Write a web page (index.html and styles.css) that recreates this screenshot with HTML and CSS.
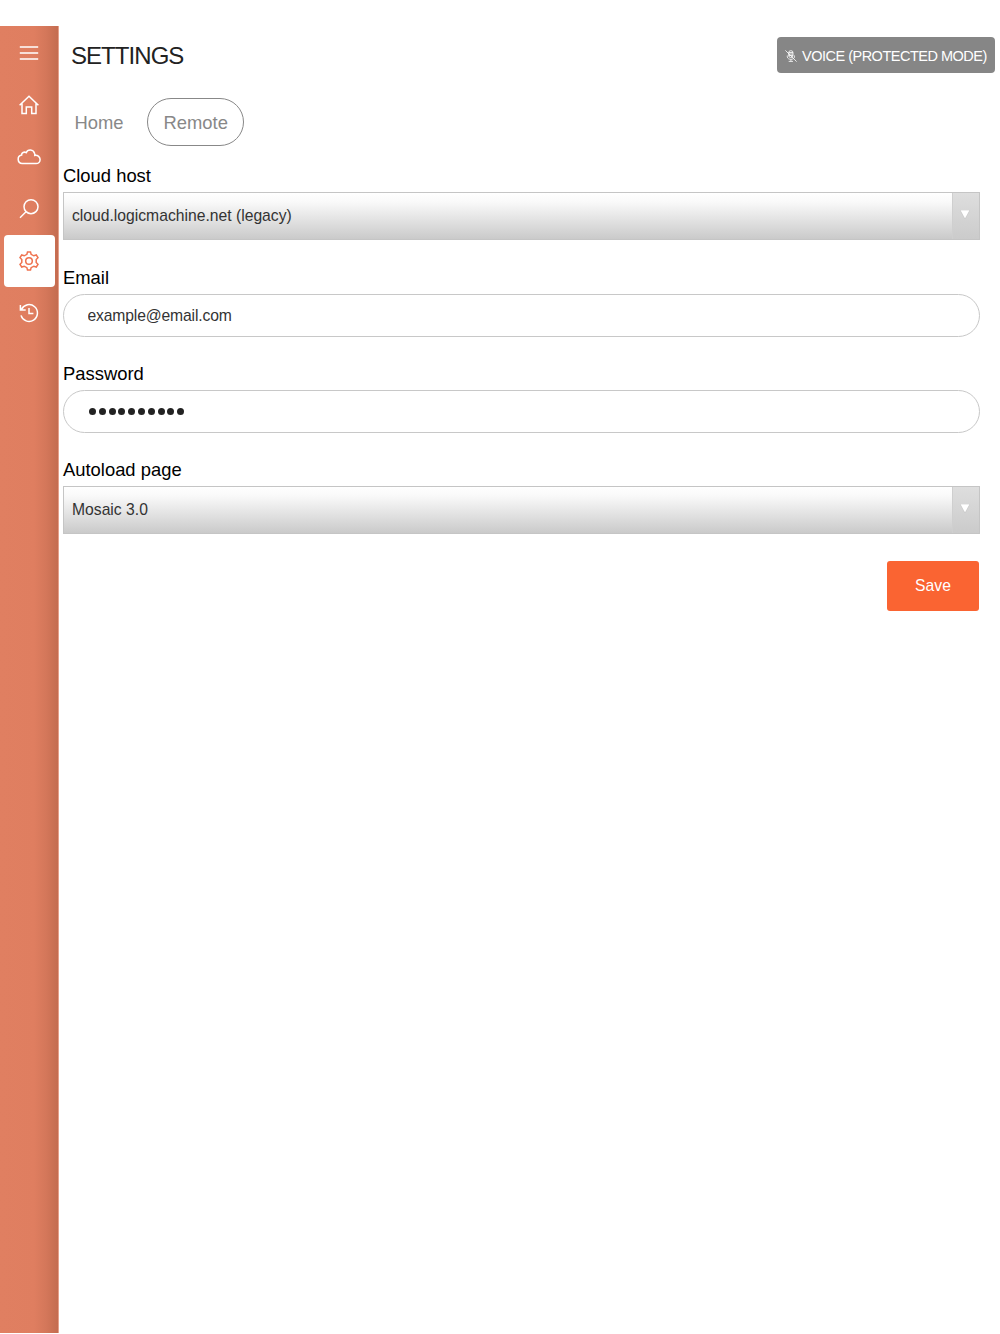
FILE: index.html
```
<!DOCTYPE html>
<html lang="en">
<head>
    <meta charset="UTF-8">
    <meta name="viewport" content="width=device-width, initial-scale=1.0">
    <title>Settings</title>
    <link rel="stylesheet" href="styles.css">
</head>
<body>

    <div class="app">
        <nav class="sidebar">
            <a class="nav-item" href="#" aria-label="Menu">
                <svg class="icon" viewBox="0 0 24 24"><path d="M2.8 5.9h18.4M2.8 12h18.4M2.8 18h18.4"/></svg>
            </a>
            <a class="nav-item" href="#" aria-label="Home">
                <svg class="icon" viewBox="0 0 24 24"><path d="M2.6 12.3 12 3.2l9.400 9.100M5 10.500v10.100h4.300v-6.700h5.400v6.700H19V10.500"/></svg>
            </a>
            <a class="nav-item" href="#" aria-label="Cloud">
                <svg class="icon" viewBox="0 0 24 24"><path d="M5.200 18.600a4.300 4.300 0 0 1-.6-8.500C4.400 7.800 7.200 6.300 9.200 7.700c1.600-4 7.300-3.600 8.400.8.300.7.300 1.300.2 1.900 3.100-.4 5.300 1.500 5.300 4.100 0 2.300-1.700 4.100-4 4.100z"/></svg>
            </a>
            <a class="nav-item" href="#" aria-label="Search">
                <svg class="icon" viewBox="0 0 24 24"><circle cx="14" cy="9.700" r="7"/><path d="M9 14.700 3 20.700"/></svg>
            </a>
            <a class="nav-item active" href="#" aria-label="Settings">
                <svg class="icon" viewBox="0 0 24 24"><path d="M9.900 5.300 10.500 2.900h3l.6 2.400 2.700 1.500 2.500-.8 1.700 2.700-1.800 1.800v3l1.800 1.800-1.700 2.700-2.500-.8-2.700 1.500-.6 2.400h-3l-.6-2.400-2.700-1.500-2.500.8L3 15.300l1.800-1.800v-3L3 8.700 4.700 6l2.500.8z"/><circle cx="12" cy="12" r="3.300"/></svg>
            </a>
            <a class="nav-item" href="#" aria-label="History">
                <svg class="icon" viewBox="0 0 24 24"><path d="M4.500 8.300A8.400 8.400 0 1 1 4 14.400M3.400 4v5h5.300M12 7v5.500h4.400"/></svg>
            </a>
        </nav>

        <main class="content">
            <header class="header">
                <h1 class="title">SETTINGS</h1>
                <button class="voice" type="button">
                    <svg class="mic" viewBox="0 0 12 12"><rect x="3.700" y=".7" width="4.300" height="6.800" rx="2"/><path d="M3.700 2.500H8M3.700 4H8M3.700 5.500H8M2.300 5.500v1.300c0 3.400 7.200 3.400 7.200 0V5.500M5.900 9.400v1.900M3.700 11.400H8M.4.400l11.200 11.200"/></svg>
                    <span>VOICE (PROTECTED MODE)</span>
                </button>
            </header>

            <div class="tabs">
                <a class="tab" href="#">Home</a>
                <a class="tab selected" href="#">Remote</a>
            </div>

            <form class="form">
                <label class="label">Cloud host</label>
                <div class="select">
                    <span class="select-value">cloud.logicmachine.net (legacy)</span>
                    <span class="select-arrow"><svg viewBox="0 0 10 9"><path d="M0 0h10L5 9z"/></svg></span>
                </div>

                <label class="label email-label" for="email">Email</label>
                <input class="input email" id="email" type="text" value="example@email.com">

                <label class="label">Password</label>
                <div class="input dots">
                    <i></i><i></i><i></i><i></i><i></i><i></i><i></i><i></i><i></i><i></i>
                </div>

                <label class="label">Autoload page</label>
                <div class="select">
                    <span class="select-value">Mosaic 3.0</span>
                    <span class="select-arrow"><svg viewBox="0 0 10 9"><path d="M0 0h10L5 9z"/></svg></span>
                </div>

                <button class="save" type="button">Save</button>
            </form>
        </main>
    </div>

</body>
</html>
```

FILE: styles.css
```
* {
    box-sizing: border-box;
}

body {
    margin: 0;
    padding-top: 26px;
    background-color: #fff;
    font-family: "Liberation Sans", Arial, sans-serif;
    color: #000;
}

a {
    text-decoration: none;
}

.app {
    display: flex;
    height: 1307px;
}

/* Sidebar */
.sidebar {
    width: 59px;
    padding: 1px 4px 0;
    background: linear-gradient(to right, #e07f61 0, #df7e60 34px, #d4775a 46px, #c46c50 58px);
    border-right: 1px solid #e5a08b;
}

.nav-item {
    display: flex;
    align-items: center;
    justify-content: center;
    width: 51px;
    height: 52px;
    padding-right: 1px;
    border-radius: 4px;
    color: #fff;
}

.nav-item.active {
    background-color: #fff;
    color: #ef7350;
}

.icon {
    width: 24px;
    height: 24px;
    fill: none;
    stroke: currentColor;
    stroke-width: 1.5;
}

/* Header */
.content {
    flex: 1;
    padding: 11px 5.5px 0 4px;
}

.header {
    display: flex;
    justify-content: space-between;
    height: 61px;
}

.title {
    margin: 0 0 0 8px;
    font-size: 24px;
    font-weight: normal;
    line-height: 38px;
    letter-spacing: -0.95px;
    color: #222;
}

.voice {
    display: flex;
    align-items: center;
    gap: 5px;
    width: 218px;
    height: 36px;
    padding: 2px 0 0 8.5px;
    border: 0;
    border-radius: 4px;
    background-color: #868686;
    color: #fff;
    font-family: inherit;
    font-size: 14.5px;
    letter-spacing: -0.5px;
    white-space: nowrap;
}

.mic {
    width: 12px;
    height: 12px;
    fill: none;
    stroke: #fff;
    stroke-width: 0.8;
}

/* Tabs */
.tabs {
    display: flex;
    gap: 6px;
    height: 48px;
}

.tab {
    height: 48px;
    padding: 1px 16.5px 0 10.4px;
    border: 1px solid transparent;
    font-size: 18.4px;
    line-height: 46px;
    color: #888;
}

.tab.selected {
    width: 97.5px;
    padding: 1px 0 0;
    border-color: #888;
    border-radius: 24px;
    text-align: center;
}

/* Form */
.form {
    display: flex;
    flex-direction: column;
    width: 917px;
    padding-top: 18px;
}

.label {
    height: 28px;
    font-size: 18.4px;
    line-height: 24px;
}

.email-label {
    margin-top: -1px;
}

.select {
    display: flex;
    height: 48px;
    margin-bottom: 27px;
    border: 1px solid #c5c5c5;
    background: linear-gradient(#fff 0, #f9f9f9 20%, #cacaca 100%);
}

.select-value {
    flex: 1;
    padding-left: 8px;
    font-size: 15.7px;
    line-height: 46px;
    color: #333;
}

.select-arrow {
    display: flex;
    justify-content: center;
    width: 27px;
    padding: 17px 2px 0 0;
    border-left: 1px solid #cfcfcf;
    background: linear-gradient(#dedede, #cbcbcb);
}

.select-arrow svg {
    width: 10px;
    height: 9px;
    fill: #fff;
    stroke: #bbb;
    stroke-width: 0.5;
}

.input {
    width: 100%;
    height: 43px;
    margin-bottom: 25px;
    padding: 0 24px;
    border: 1px solid #c8c8c8;
    border-radius: 22px;
    background-color: #fff;
    font-family: inherit;
    font-size: 15.7px;
    color: #333;
}

.email {
    padding: 0 23.5px;
    letter-spacing: -0.15px;
}

.dots {
    display: flex;
    align-items: center;
    gap: 2.8px;
    padding-left: 25px;
}

.dots i {
    width: 7px;
    height: 7px;
    border-radius: 50%;
    background-color: #222;
}

.save {
    align-self: flex-end;
    width: 92px;
    height: 50px;
    margin-right: 1px;
    border: 0;
    border-radius: 3px;
    background-color: #fa6432;
    color: #fff;
    font-family: inherit;
    font-size: 15.7px;
}
```
